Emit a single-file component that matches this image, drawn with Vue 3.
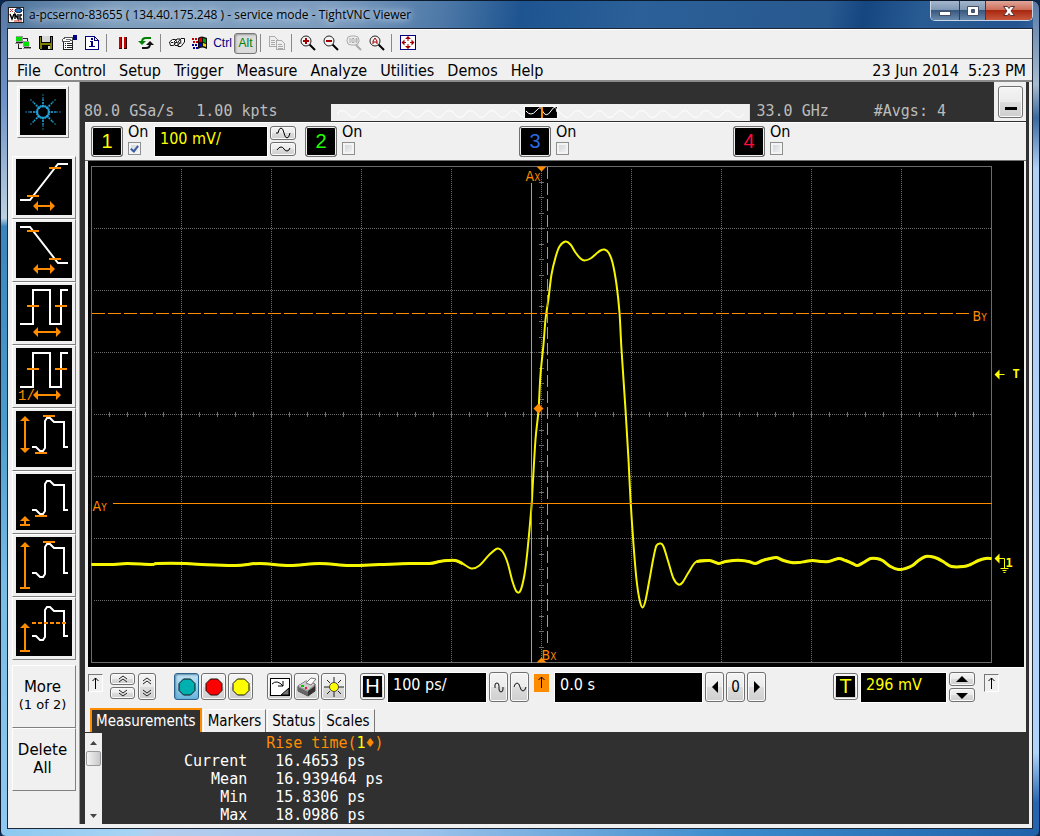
<script setup>
import { computed, ref } from 'vue';

const menus = ['File', 'Control', 'Setup', 'Trigger', 'Measure', 'Analyze', 'Utilities', 'Demos', 'Help'];

const channels = ref([
  { id: 1, on: true, scale: '100 mV/', color: '#ffff00' },
  { id: 2, on: false, scale: null, color: '#22ff00' },
  { id: 3, on: false, scale: null, color: '#2a6ae0' },
  { id: 4, on: false, scale: null, color: '#ff0a3c' },
]);

const timebase = ref('100 ps/');
const delay = ref('0.0 s');
const level = ref('296 mV');

const tabs = ['Measurements', 'Markers', 'Status', 'Scales'];
const activeTab = ref('Measurements');

const results = [
  { label: 'Current', value: '16.4653 ps' },
  { label: 'Mean', value: '16.939464 ps' },
  { label: 'Min', value: '15.8306 ps' },
  { label: 'Max', value: '18.0986 ps' },
];

// Measurement icons, drawn on a 56 x 56 square
const pulse = 'M16 36H20L24 40H27L29 37V10L31 7H34L38 11H48V36H52';
const square = 'M4 39H17V5H34V39H45V5H52';
const base = 'M4 51H14';
const tools = [
  { name: 'Rise time', wave: 'M4 41H14L42 5H52', marks: 'M11 37H23M33 9H45M20 47H36', heads: 'M17 47l5 -5v10zM39 47l-5 -5v10z' },
  { name: 'Fall time', wave: 'M4 5H14L42 41H52', marks: 'M11 9H23M33 37H45M20 47H36', heads: 'M17 47l5 -5v10zM39 47l-5 -5v10z' },
  { name: 'Period', wave: square, marks: 'M11 21H23M39 21H51M20 47H42', heads: 'M17 47l5 -5v10zM45 47l-5 -5v10z' },
  { name: 'Frequency', wave: square, marks: 'M11 21H23M39 21H51M20 47H42', heads: 'M17 47l5 -5v10zM45 47l-5 -5v10z', text: '1/' },
  { name: 'V p-p', wave: pulse, marks: 'M27 5H39M19 42H31M9 8V39', heads: 'M9 5l5 5h-10zM9 42l5 -5h-10z' },
  { name: 'V min', wave: pulse, marks: 'M19 42H31M9 45V51' + base, heads: 'M9 42l5 5h-10z' },
  { name: 'V max', wave: pulse, marks: 'M27 5H39M9 8V51' + base, heads: 'M9 5l5 5h-10z' },
  { name: 'V avg', wave: pulse, marks: 'M9 26V51' + base, dash: 'M16 23H51', heads: 'M9 23l5 5h-10z' },
];

// Agilent spark
const spark = [];
for (let i = 0; i < 8; i++) {
  const a = (i * Math.PI) / 4;
  [[6, 1.5], [9, 1.1], [12, 0.9], [14, 0.8], [17, 0.7]].forEach(([r, size]) => {
    spark.push({ x: 23 + r * Math.cos(a), y: 23 + r * Math.sin(a), size });
  });
  const b = a + Math.PI / 8;
  spark.push({ x: 23 + 6 * Math.cos(b), y: 23 + 6 * Math.sin(b), size: 1.2 });
}

// Graticule: 10 x 8 divisions of 90 x 62
const cols = [1, 2, 3, 4, 5, 6, 7, 8, 9].map((n) => n * 90);
const rows = [1, 2, 3, 4, 5, 6, 7].map((n) => n * 62);
const ticks = computed(() => {
  let d = '';
  for (let x = 18; x < 900; x += 18) d += `M${x} 245.5v5`;
  for (let i = 1; i < 32; i++) d += `M447.5 ${Math.round(i * 15.5)}h5`;
  return d;
});

const samples = [
  [0, 398], [22, 398], [36, 397], [60, 398], [66, 397], [94, 397], [110, 398], [144, 399], [168, 397],
  [198, 399], [228, 397], [258, 399], [288, 398], [318, 397], [338, 397], [348, 395], [356, 394], [364, 394],
  [371, 397], [380, 402], [388, 399], [398, 388], [406, 382], [411, 385], [416, 396], [421, 415], [425, 425],
  [429, 424], [433, 408], [436, 384], [440, 340], [441, 323], [444, 273], [447, 244], [449, 208], [452, 178],
  [454, 153], [457, 132], [460, 108], [464, 91], [468, 80], [474, 75], [479, 78], [484, 86], [489, 92],
  [493, 94], [499, 92], [505, 87], [509, 84], [513, 83], [517, 86], [521, 96], [525, 118], [528, 146],
  [530, 183], [534, 243], [537, 293], [539, 333], [542, 378], [545, 413], [548, 433], [551, 441], [554, 434],
  [558, 413], [562, 391], [565, 379], [569, 377], [572, 380], [577, 396], [582, 412], [587, 418], [591, 416],
  [597, 406], [605, 395], [618, 394], [627, 397], [634, 395], [642, 394], [650, 394], [657, 395], [664, 397],
  [671, 394], [679, 392], [685, 391], [692, 394], [700, 396], [707, 396], [714, 395], [721, 394], [729, 395],
  [737, 395], [747, 392], [754, 394], [761, 397], [766, 399], [772, 396], [779, 392], [785, 392], [791, 394],
  [799, 400], [807, 403], [814, 402], [821, 399], [827, 394], [834, 390], [839, 390], [846, 392], [853, 396],
  [860, 400], [872, 400], [879, 398], [887, 394], [894, 392], [900, 392],
];

// Catmull-Rom through the points
function smooth(points) {
  let d = `M${points[0]}`;
  for (let i = 0; i < points.length - 1; i++) {
    const p0 = points[i - 1] || points[i];
    const p1 = points[i];
    const p2 = points[i + 1];
    const p3 = points[i + 2] || p2;
    d += `C${p1[0] + (p2[0] - p0[0]) / 6} ${p1[1] + (p2[1] - p0[1]) / 6}`;
    d += ` ${p2[0] - (p3[0] - p1[0]) / 6} ${p2[1] - (p3[1] - p1[1]) / 6} ${p2[0]} ${p2[1]}`;
  }
  return d;
}

const trace = computed(() => smooth(samples));
// The quiet parts look thicker because the noise adds up there
const noise = computed(() => smooth(samples.filter((p) => p[0] < 372)) + smooth(samples.filter((p) => p[0] > 604)));

const memoryWave = 'M6 10' + 'q5 -7 10.700 0t10.700 0'.repeat(19);
</script>

<template>
  <div class="window">
    <header class="titlebar">
      <svg class="app-icon" width="16" height="16" viewBox="0 0 16 16">
        <rect width="16" height="16" fill="#fff" stroke="#222" stroke-width="2" />
        <path d="M2 2l3 3M5 2L2 5" stroke="#c33" />
        <ellipse cx="10.5" cy="3.5" rx="3.5" ry="2" fill="#27c" stroke="#113" />
        <path d="M2 7l2 5l2 -5M7 12V7l3 5V7M14 8h-2v4h2" fill="none" stroke="#000" stroke-width="1.4" />
        <path d="M6 14h8" stroke="#d22" />
      </svg>
      <span class="title">a-pcserno-83655 ( 134.40.175.248 ) - service mode - TightVNC Viewer</span>
      <div class="win-buttons">
        <button type="button" aria-label="Minimize">
          <svg width="14" height="12" viewBox="0 0 14 12"><rect x="1.5" y="6.5" width="11" height="4" fill="#fff" stroke="#454f66" /></svg>
        </button>
        <button type="button" class="mid" aria-label="Maximize">
          <svg width="14" height="12" viewBox="0 0 14 12"><path d="M1.500 1.500h11v9h-11zM5.500 4.500h3v3h-3z" fill="#fff" fill-rule="evenodd" stroke="#454f66" /></svg>
        </button>
        <button type="button" class="close" aria-label="Close">
          <svg width="14" height="12" viewBox="0 0 14 12"><path d="M1.500 1.500h4l1.500 2l1.500 -2h4l-3.500 4.500l3.500 4.500h-4l-1.500 -2l-1.500 2h-4l3.500 -4.500z" fill="#fff" stroke="#5a3030" /></svg>
        </button>
      </div>
    </header>

    <div class="client">
      <div class="toolbar">
        <button type="button" aria-label="New connection">
          <svg width="16" height="16" viewBox="0 0 16 16" shape-rendering="crispEdges">
            <path d="M1 1h7v6H1zM0 8h7v1H0zM8 6h6v6H8zM8 13h8v1H8z" fill="#999" />
            <path d="M1 2h6v4H1zM9 7h5v4H9z" fill="#00e000" />
            <path d="M8 3h4v3M3 9v4h4M1 7h7M9 12h7" fill="none" stroke="#222" />
          </svg>
        </button>
        <button type="button" aria-label="Save">
          <svg width="16" height="16" viewBox="0 0 16 16" shape-rendering="crispEdges">
            <path d="M1 1h14v14H2l-1 -1z" fill="#000" /><path d="M2 2h1v6h10V2h1v12H2z" fill="#808000" />
            <path d="M4 1h8v6H4z" fill="#d8d8d8" /><path d="M4 10h8v4H4z" fill="#000" /><path d="M10 11h2v3h-2z" fill="#ddd" />
          </svg>
        </button>
        <button type="button" aria-label="Options">
          <svg width="16" height="16" viewBox="0 0 16 16" shape-rendering="crispEdges">
            <path d="M2.500 5.500h9v9h-9z" fill="#fff" stroke="#222" />
            <path d="M4 8.500h1M6 8.500h5M4 10.500h1M6 10.500h5M4 12.500h1M6 12.500h5" stroke="#222" />
            <path d="M1 5l4 -3h6l1 3l-3 1H4l-2 1z" fill="#fff" stroke="#555" />
            <path d="M12 0h4v5h-4z" fill="#000080" /><path d="M5 4.500h5" stroke="#777" />
          </svg>
        </button>
        <button type="button" aria-label="Connection info">
          <svg width="16" height="16" viewBox="0 0 16 16" shape-rendering="crispEdges">
            <path d="M1.500 1.500h9l4 4v9h-13zM10.500 1.500v4h4" fill="#fff" stroke="#000080" />
            <path d="M7 3h2v2H7zM6 6h3v5h2v1H5v-1h2V7H6z" fill="#000080" />
          </svg>
        </button>
        <i class="sep"></i>
        <button type="button" aria-label="Pause">
          <svg width="16" height="16" viewBox="0 0 16 16" shape-rendering="crispEdges">
            <path d="M4 2h3v12H4zM9 2h3v12H9z" fill="#300" /><path d="M4 2h2v11H4zM9 2h2v11H9z" fill="#d00000" />
          </svg>
        </button>
        <button type="button" aria-label="Refresh">
          <svg width="16" height="16" viewBox="0 0 16 16">
            <path d="M13 3H8q-4 0 -4 4" fill="none" stroke="#008000" stroke-width="2" /><path d="M0 6h8l-4 4z" fill="#008000" />
            <path d="M4 13h4q4 0 4 -4" fill="none" stroke="#111" stroke-width="2" /><path d="M8 10h8l-4 -4z" fill="#111" />
          </svg>
        </button>
        <i class="sep"></i>
        <button type="button" aria-label="Ctrl-Alt-Del">
          <svg width="16" height="16" viewBox="0 0 16 16">
            <path d="M0.500 7l3 -2.500h3l1 2l-3 4h-3zM5 7l3 -3h3l1 2l-3 4.500h-3zM9 7l3 -3.500h3.500v3.500l-3.500 4.500h-3z" fill="#fff" stroke="#111" />
            <path d="M2 7.500h2M6.500 7.500h2M10.500 8h2" stroke="#111" />
          </svg>
        </button>
        <button type="button" aria-label="Ctrl-Esc">
          <svg width="16" height="16" viewBox="0 0 16 16">
            <path d="M6 3q3 -3 9 0v11q-5 -3 -9 0z" fill="#111" />
            <path d="M7 4q1 -2 3 -1v4H7z" fill="#e00000" /><path d="M11 3l3 1v4l-3 -1z" fill="#00a000" />
            <path d="M7 9l3 -1v3l-3 1z" fill="#0000c0" /><path d="M11 8l3 1v3l-3 -1z" fill="#e8d800" />
            <path d="M0 4h5M1 7h5" stroke="#c00000" stroke-width="2" stroke-dasharray="2 1" /><path d="M0 10h5M1 13h5" stroke="#0000a0" stroke-width="2" stroke-dasharray="2 1" />
          </svg>
        </button>
        <button type="button" class="ctrl">Ctrl</button>
        <button type="button" class="alt">Alt</button>
        <i class="sep"></i>
        <button type="button" aria-label="Transfer files">
          <svg width="16" height="16" viewBox="0 0 16 16" shape-rendering="crispEdges">
            <path d="M0.500 1.500h5l3 3v7h-8zM2 5h4M2 7h4M2 9h4" fill="#eee" stroke="#aaa" />
            <path d="M7.500 5.500h5l3 3v6h-8zM9 9h4M9 11h5M9 13h5" fill="#eee" stroke="#aaa" />
          </svg>
        </button>
        <i class="sep"></i>
        <button type="button" aria-label="Zoom in">
          <svg width="16" height="16" viewBox="0 0 16 16">
            <path d="M9.500 9.500l5.500 5.500" stroke="#000" stroke-width="2" /><circle cx="6" cy="6" r="5" fill="#f4f4f4" stroke="#222" />
            <path d="M3 6h6M6 3v6" stroke="#a00000" stroke-width="2" />
          </svg>
        </button>
        <button type="button" aria-label="Zoom out">
          <svg width="16" height="16" viewBox="0 0 16 16">
            <path d="M9.500 9.500l5.500 5.500" stroke="#000" stroke-width="2" /><circle cx="6" cy="6" r="5" fill="#f4f4f4" stroke="#222" />
            <path d="M3 6h6" stroke="#a00000" stroke-width="2" />
          </svg>
        </button>
        <button type="button" aria-label="Zoom 100%">
          <svg width="16" height="16" viewBox="0 0 16 16">
            <path d="M10 10l5 5" stroke="#aaa" stroke-width="2" /><rect x="1" y="1" width="12" height="9" rx="4" fill="#eee" stroke="#aaa" />
            <path d="M4 3v5M6 3.500h2v4h-2zM10 3.500h1v4h-1z" fill="none" stroke="#aaa" />
          </svg>
        </button>
        <button type="button" aria-label="Zoom auto">
          <svg width="16" height="16" viewBox="0 0 16 16">
            <path d="M9.500 9.500l5.500 5.500" stroke="#000" stroke-width="2" /><circle cx="6" cy="6" r="5" fill="#f4f4f4" stroke="#222" />
            <path d="M4 9V6l2 -3l2 3v3M4 7h4" fill="none" stroke="#a00000" />
          </svg>
        </button>
        <i class="sep"></i>
        <button type="button" aria-label="Full screen">
          <svg width="16" height="16" viewBox="0 0 16 16">
            <path d="M0.500 0.500h15v14h-15z" fill="#fff" stroke="#000080" shape-rendering="crispEdges" />
            <path d="M8 1l3 3H5zM8 14l3 -3H5zM1.500 7.500l3 -3v6zM14.500 7.500l-3 -3v6z" fill="#a00000" />
            <path d="M8 4v2M8 9v2M4 7.500h2M10 7.500h2" stroke="#a00000" />
          </svg>
        </button>
      </div>

      <nav class="menubar">
        <a v-for="item in menus" :key="item" href="#">{{ item }}</a>
        <span class="clock">23 Jun 2014&nbsp; 5:23 PM</span>
      </nav>

      <div class="scope">
        <aside class="sidebar">
          <button type="button" class="logo" aria-label="Agilent">
            <svg width="46" height="46" viewBox="0 0 46 46">
              <circle v-for="(dot, i) in spark" :key="i" :cx="dot.x" :cy="dot.y" :r="dot.size" fill="#22a0d8" />
              <circle cx="23" cy="23" r="4" />
            </svg>
          </button>
          <button v-for="tool in tools" :key="tool.name" type="button" class="tool" :aria-label="tool.name">
            <svg width="56" height="56" viewBox="0 0 56 56">
              <path :d="tool.wave" fill="none" stroke="#fff" stroke-width="2" />
              <path :d="tool.marks" fill="none" stroke="#ff8c00" stroke-width="2" />
              <path v-if="tool.dash" :d="tool.dash" stroke="#ff8c00" stroke-width="2" stroke-dasharray="4 2" />
              <path :d="tool.heads" fill="#ff8c00" />
              <text v-if="tool.text" class="icon-text" x="2" y="52">{{ tool.text }}</text>
            </svg>
          </button>
          <button type="button" class="side-text more">More<small>(1 of 2)</small></button>
          <button type="button" class="side-text">Delete<br>All</button>
        </aside>

        <main class="main">
          <div class="status">
            <span class="rate">80.0 GSa/s</span>
            <span class="points">1.00 kpts</span>
            <svg class="memory" viewBox="0 0 419 17" preserveAspectRatio="none">
              <rect width="419" height="17" fill="#f0f0f0" />
              <path :d="memoryWave" fill="none" stroke="#fff" stroke-width="1" />
              <rect x="193.5" y="2.5" width="33" height="12" fill="#000" stroke="#fff" />
              <path d="M195 7q5 6 10 0t6 -1M211 6q4 9 9 1t6 1" fill="none" stroke="#fff" />
              <path d="M211 3v11" stroke="#ff8c00" stroke-width="2" />
            </svg>
            <span class="bandwidth">33.0 GHz</span>
            <span>#Avgs: 4</span>
            <div class="collapse-box">
              <button type="button" class="btn collapse" aria-label="Collapse"><i></i></button>
            </div>
          </div>

          <div class="panel">
            <div class="channels">
              <div v-for="ch in channels" :key="ch.id" class="channel">
                <button type="button" class="key" :style="{ color: ch.color }">{{ ch.id }}</button>
                <label class="on">On<input v-model="ch.on" type="checkbox"></label>
                <template v-if="ch.scale">
                  <input v-model="ch.scale" class="field scale" type="text" aria-label="Channel 1 scale">
                  <div class="stack">
                    <button type="button" class="btn small" aria-label="Increase sensitivity">
                      <svg width="16" height="12" viewBox="0 0 16 12"><path d="M1 6h2q1 -5 3 -5t3 5t3 5t3 -5" fill="none" stroke="#000" /></svg>
                    </button>
                    <button type="button" class="btn small" aria-label="Decrease sensitivity">
                      <svg width="16" height="12" viewBox="0 0 16 12"><path d="M2 7q2 -3 4 -3t3 2t3 2t3 -3" fill="none" stroke="#000" /></svg>
                    </button>
                  </div>
                </template>
              </div>
            </div>

            <svg class="plot" viewBox="0 0 936 506">
              <g transform="translate(3.5 5.5)">
                <g fill="none" stroke="#6c6c6c" shape-rendering="crispEdges">
                  <rect width="900" height="496" />
                  <path v-for="x in cols" :key="'c' + x" :d="`M${x} 2V495`" stroke-dasharray="1 1" />
                  <path v-for="y in rows" :key="'r' + y" :d="`M2 ${y}H899`" stroke-dasharray="1 1" />
                  <path :d="ticks" />
                </g>
                <path :d="trace" fill="none" stroke="#f5f500" stroke-width="2" stroke-linejoin="round" />
                <path :d="noise" fill="none" stroke="#f5f500" stroke-width="3" stroke-linejoin="round" />
                <g fill="none" stroke="#ff8c00" shape-rendering="crispEdges">
                  <path d="M440 16V496" />
                  <path d="M456 0V478" stroke-dasharray="12 4" />
                  <path d="M0 147H880" stroke-dasharray="13 3" />
                  <path d="M21 337H900" />
                </g>
                <path d="M445 0h10l-5 5zM445 496h10l-5 -5zM447 237l5 5l-5 5l-5 -5z" fill="#ff8c00" />
                <g class="marker">
                  <text x="434" y="14">A<tspan>X</tspan></text>
                  <text x="450" y="493">B<tspan>X</tspan></text>
                  <text x="1" y="344">A<tspan>Y</tspan></text>
                  <text x="881" y="154">B<tspan>Y</tspan></text>
                </g>
                <g fill="none" stroke="#ffff00">
                  <path d="M906 208h7M906 392h7v10M909 402h8M911 404h4M912 406h2" />
                  <path d="M903 208l5 -5v10zM903 392l5 -5v10z" fill="#ffff00" stroke="none" />
                </g>
                <text class="level" x="921" y="211">T</text>
                <text class="level" x="914" y="400">1</text>
              </g>
            </svg>

            <div class="controls">
              <div class="group">
                <span class="pin">
                  <svg width="9" height="14" viewBox="0 0 9 14"><path d="M4.500 2v11M1.500 5l3 -3l3 3" fill="none" stroke="#000" /></svg>
                </span>
                <div class="stack chev">
                  <button type="button" class="btn small" aria-label="Panel up">
                    <svg width="12" height="10" viewBox="0 0 12 10"><path d="M2 5l4 -3l4 3M2 8l4 -3l4 3" fill="none" stroke="#222" /></svg>
                  </button>
                  <button type="button" class="btn small" aria-label="Panel down">
                    <svg width="12" height="10" viewBox="0 0 12 10"><path d="M2 2l4 3l4 -3M2 5l4 3l4 -3" fill="none" stroke="#222" /></svg>
                  </button>
                </div>
                <button type="button" class="btn split" aria-label="Panel size">
                  <svg width="12" height="24" viewBox="0 0 12 24"><path d="M2 6l4 -3l4 3M2 9l4 -3l4 3M2 15l4 3l4 -3M2 18l4 3l4 -3" fill="none" stroke="#222" /></svg>
                </button>
              </div>
              <div class="group">
                <button type="button" class="btn tile selected" aria-label="Run">
                  <svg width="18" height="18" viewBox="0 0 18 18"><path d="M5.500 1h7l4.500 4.500v7l-4.500 4.500h-7l-4.500 -4.500v-7z" fill="#00b0b0" stroke="#111" /></svg>
                </button>
                <button type="button" class="btn tile" aria-label="Stop">
                  <svg width="18" height="18" viewBox="0 0 18 18"><path d="M5.500 1h7l4.500 4.500v7l-4.500 4.500h-7l-4.500 -4.500v-7z" fill="#f00" stroke="#111" /></svg>
                </button>
                <button type="button" class="btn tile" aria-label="Single">
                  <svg width="18" height="18" viewBox="0 0 18 18"><path d="M5.500 1h7l4.500 4.500v7l-4.500 4.500h-7l-4.500 -4.500v-7z" fill="#ff0" stroke="#111" /></svg>
                </button>
              </div>
              <div class="group">
                <button type="button" class="btn tile" aria-label="Clear display">
                  <svg width="22" height="22" viewBox="0 0 22 22">
                    <rect x="1.5" y="2.5" width="19" height="17" fill="#fff" stroke="#000" />
                    <path d="M20 12v7h-8z" fill="#777" stroke="#000" /><path d="M3 8q5 -5 11 2M14 5v5h-5" fill="none" stroke="#000" />
                  </svg>
                </button>
                <button type="button" class="btn tile" aria-label="Print">
                  <svg width="22" height="22" viewBox="0 0 22 22">
                    <path d="M2 10l8 -5l9 3v7l-7 5l-10 -5z" fill="#999" stroke="#444" /><path d="M2 10l8 -5l9 3l-7 6z" fill="#ccc" />
                    <path d="M10 7l5 -5l5 1l-5 6z" fill="#fff" stroke="#777" /><path d="M2 11l10 5v4l-10 -5z" fill="#666" />
                    <path d="M12 15l7 -5v5l-7 5z" fill="#333" /><path d="M5 10h3" stroke="#0c0" stroke-width="2" /><path d="M9 12h2" stroke="#e22" stroke-width="2" />
                  </svg>
                </button>
                <button type="button" class="btn tile" aria-label="Brightness">
                  <svg width="22" height="22" viewBox="0 0 22 22">
                    <path d="M11 1v5M11 16v5M1 11h5M16 11h5M4 4l3 3M15 15l3 3M18 4l-3 3M7 15l-3 3" stroke="#222" />
                    <circle cx="11" cy="11" r="4.5" fill="#ff0" stroke="#444" />
                  </svg>
                </button>
              </div>
              <div class="group horizontal">
                <button type="button" class="btn tile letter"><b>H</b></button>
                <input v-model="timebase" class="field time" type="text" aria-label="Time per division">
                <button type="button" class="btn tall" aria-label="Zoom out time">
                  <svg width="14" height="16" viewBox="0 0 14 16"><path d="M3 9V6q0 -2 2 -2t2 3v3q0 3 2 3t2 -3V8" fill="none" stroke="#111" /></svg>
                </button>
                <button type="button" class="btn tall" aria-label="Zoom in time">
                  <svg width="14" height="16" viewBox="0 0 14 16"><path d="M1 8q1 -4 3 -4t3 4t3 4t3 -4" fill="none" stroke="#111" /></svg>
                </button>
                <span class="pin orange">
                  <svg width="9" height="14" viewBox="0 0 9 14"><path d="M4.500 1v11M1.500 4l3 -3l3 3" fill="none" stroke="#000" /></svg>
                </span>
                <input v-model="delay" class="field delay" type="text" aria-label="Horizontal position">
                <button type="button" class="btn tall" aria-label="Move left">
                  <svg width="8" height="12" viewBox="0 0 8 12"><path d="M7 0v12L1 6z" /></svg>
                </button>
                <button type="button" class="btn tall">0</button>
                <button type="button" class="btn tall" aria-label="Move right">
                  <svg width="8" height="12" viewBox="0 0 8 12"><path d="M1 0v12l6 -6z" /></svg>
                </button>
              </div>
              <div class="group trigger">
                <button type="button" class="btn tile letter yellow"><b>T</b></button>
                <input v-model="level" class="field volt" type="text" aria-label="Trigger level">
                <div class="stack spin">
                  <button type="button" class="btn small" aria-label="Level up">
                    <svg width="12" height="7" viewBox="0 0 12 7"><path d="M0 6l6 -6l6 6z" /></svg>
                  </button>
                  <button type="button" class="btn small" aria-label="Level down">
                    <svg width="12" height="7" viewBox="0 0 12 7"><path d="M0 1l6 6l6 -6z" /></svg>
                  </button>
                </div>
                <span class="pin">
                  <svg width="9" height="14" viewBox="0 0 9 14"><path d="M4.500 2v11M1.500 5l3 -3l3 3" fill="none" stroke="#000" /></svg>
                </span>
              </div>
            </div>

            <div class="tabs">
              <button
                v-for="tab in tabs"
                :key="tab"
                type="button"
                class="tab"
                :class="{ active: tab === activeTab }"
                @click="activeTab = tab"
              >{{ tab }}</button>
            </div>
          </div>

          <div class="results">
            <div class="scrollbar">
              <svg width="7" height="4" viewBox="0 0 7 4"><path d="M0 4l3.500 -4l3.500 4z" fill="#444" /></svg>
              <i class="thumb"></i>
              <svg width="7" height="4" viewBox="0 0 7 4"><path d="M0 0l3.500 4l3.500 -4z" fill="#444" /></svg>
            </div>
            <table>
              <thead>
                <tr><td></td><th scope="col">Rise time(<em>1</em>♦)</th></tr>
              </thead>
              <tbody>
                <tr v-for="row in results" :key="row.label">
                  <th scope="row">{{ row.label }}</th>
                  <td>{{ row.value }}</td>
                </tr>
              </tbody>
            </table>
          </div>
        </main>
      </div>
    </div>
  </div>
</template>

<style>
body {
  margin: 0;
  background: #0b2850;
}
</style>

<style scoped>
.window {
  display: flex;
  flex-direction: column;
  box-sizing: border-box;
  min-height: 100vh;
  padding: 0 6px 7px;
  border: 1px solid #0c1a2e;
  border-radius: 8px 8px 6px 6px;
  font-family: "DejaVu Sans Condensed", "Noto Sans", sans-serif;
  font-size: 16px;
  color: #000;
  background:
    linear-gradient(90deg, #8cc8f0, #a8d4f4 13%, #b4cdee 15%, #9ec4ec 40%, #3c8ccc 70%, #1f62aa) bottom / 100% 7px no-repeat,
    linear-gradient(#5878a4, #6f93c8 12%, #bcd0e0 26%, #3a85bb 27%, #4a9ccc 50%, #78bce4 70%, #90c8f0) left / 6px 100% no-repeat,
    linear-gradient(#5878a4, #a8bcd0 10%, #3c6a9c 14%, #b0d0f4 20%, #b0d4f8 90%, #2565b0 96%) right / 6px 100% no-repeat,
    linear-gradient(100deg, #4a7098, #7d9dbc 10%, #7c9cbe 28%, #4a76a6 38%, #1e5490 44%, #2b6098 54%, #28598f 70%, #154680 73%, #2a5c94 78%, #235490 86%, #6f8fb4 94%, #7c9abc);
}

button {
  padding: 0;
  font: inherit;
  color: inherit;
}

svg {
  display: block;
}

/* Title bar */
.titlebar {
  display: flex;
  height: 27px;
}
.app-icon {
  margin: 6px 0 0 1px;
}
.title {
  flex: 1;
  padding: 5px 0 0 5px;
  font-family: "Open Sans", "Noto Sans", sans-serif;
  font-size: 12px;
  line-height: 18px;
  text-shadow: 0 0 6px #c4d6e8, 0 0 8px #b0c6de, 0 0 12px #b0c6de;
  white-space: nowrap;
}
.win-buttons {
  display: flex;
  height: 19px;
  border: 1px solid #c8d6e8;
  border-top: 0;
  border-radius: 0 0 5px 5px;
  overflow: hidden;
}
.win-buttons button {
  display: grid;
  place-items: center;
  width: 29px;
  border: 0;
  border-right: 1px solid #2a3c58;
  background: linear-gradient(#a4b6cc, #7f97b4 48%, #38587e 50%, #6888ac);
}
.win-buttons .mid {
  width: 26px;
}
.win-buttons .close {
  width: 46px;
  border-right: 0;
  background: linear-gradient(#e0a698, #cc6c58 48%, #a82810 50%, #c8583c);
}

/* Client area */
.client {
  display: flex;
  flex: 1;
  flex-direction: column;
  border: 1px solid #1c2634;
  background: #f0f0f0;
  padding-bottom: 4px;
}
.toolbar {
  display: flex;
  align-items: center;
  height: 26px;
  padding: 0 0 2px 3px;
  border-top: 1px solid #fff;
  border-bottom: 1px solid #707070;
}
.toolbar button {
  display: grid;
  place-items: center;
  width: 23px;
  height: 22px;
  border: 0;
  background: none;
  font-family: "Liberation Sans", sans-serif;
  font-size: 12px;
}
.toolbar .ctrl {
  color: #000080;
}
.toolbar .alt {
  height: 21px;
  border: 1px solid #777;
  border-radius: 3px;
  background: #dcdcdc;
  box-shadow: inset 1px 1px 2px #999;
  color: #008000;
}
.sep {
  width: 1px;
  height: 18px;
  margin: 0 4px 0 3px;
  background: #888;
}
.menubar {
  display: flex;
  gap: 13px;
  height: 21px;
  padding: 0 6px 0 9px;
  border-bottom: 2px solid #8a8a8a;
  line-height: 23px;
}
.menubar a {
  color: #000;
  text-decoration: none;
}
.clock {
  margin-left: auto;
}

/* Scope layout */
.scope {
  display: flex;
  flex: 1;
  padding-right: 3px;
}
.sidebar {
  display: flex;
  flex-direction: column;
  width: 67px;
  padding: 4px 0 0 4px;
  border-right: 1px solid #999;
}
.logo,
.tool,
.side-text {
  box-sizing: border-box;
  border: 1px solid;
  border-color: #fff #808080 #808080 #fff;
  background: #f0f0f0;
}
.logo {
  width: 52px;
  height: 52px;
  margin: 0 0 18px 5px;
  padding: 2px;
}
.tool,
.side-text {
  width: 64px;
  height: 63px;
}
.tool {
  padding: 2px 3px 3px;
}
.logo svg,
.tool svg {
  background: #000;
}
.icon-text {
  fill: #ff8c00;
  font: 14px "Liberation Mono", monospace;
}
.side-text {
  padding: 0 3px 2px 0;
  font-family: "DejaVu Sans", sans-serif;
  font-size: 15px;
  line-height: 18px;
}
.side-text small {
  display: block;
  font-size: 13px;
}
.more {
  margin-top: 5px;
}

.main {
  display: flex;
  flex: 1;
  flex-direction: column;
  min-width: 0;
  background: #303030;
}
.status {
  display: flex;
  align-items: flex-end;
  height: 40px;
  padding-right: 3px;
  padding-left: 4px;
  color: #bcbcbc;
  font-family: "DejaVu Sans Mono", monospace;
  font-size: 15px;
  line-height: 22px;
  white-space: nowrap;
}
.points {
  margin-left: 22px;
}
.memory {
  flex: 1;
  min-width: 0;
  height: 17px;
  margin: 0 7px 1px 53px;
}
.bandwidth {
  margin-right: 45px;
}
.collapse-box {
  align-self: stretch;
  margin: 0 0 1px 48px;
  padding: 4px 3px 3px 4px;
  background: #f0f0f0;
}
.btn {
  display: grid;
  place-items: center;
  box-sizing: border-box;
  border: 1px solid #707070;
  border-radius: 3px;
  background: linear-gradient(#f4f4f4, #ebebeb 50%, #dcdcdc 52%, #cfcfcf);
  box-shadow: inset 0 0 0 1px #fafafa;
}
.collapse {
  width: 25px;
  height: 32px;
}
.collapse i {
  width: 12px;
  height: 3px;
  margin-top: 12px;
  background: #000;
}

.panel {
  margin: 0 3px 0 5px;
  border-top: 1px solid #fff;
  background: #f0f0f0;
}
.channels {
  display: grid;
  grid-template-columns: repeat(4, minmax(0, 214px));
  height: 37px;
  padding-left: 6px;
  border-bottom: 1px solid #707070;
}
.channel {
  display: flex;
  align-items: flex-start;
  padding-top: 3px;
}
.key {
  box-sizing: border-box;
  width: 32px;
  height: 31px;
  border: 1px solid #707070;
  border-radius: 3px;
  background: #000;
  box-shadow: inset 0 0 0 1px #f0f0f0;
  font-family: "Liberation Sans", sans-serif;
  font-size: 20px;
}
.on {
  display: flex;
  flex-direction: column;
  width: 26px;
  padding-left: 5px;
  line-height: 12px;
}
.on input {
  appearance: none;
  width: 13px;
  height: 13px;
  margin: 4px 0 0;
  border: 1px solid #8e8f8f;
  background: linear-gradient(135deg, #cdd2d8, #f6f6f6);
  box-shadow: inset 0 0 0 2px #f4f4f4;
}
.on input:checked::after {
  content: "";
  display: block;
  width: 3px;
  height: 6px;
  margin: 1px 0 0 3px;
  border: solid #3c5ca0;
  border-width: 0 2px 2px 0;
  transform: rotate(38deg);
}
.field {
  box-sizing: border-box;
  height: 31px;
  padding: 0 5px 6px;
  border: 1px solid #fff;
  border-radius: 0;
  background: #000;
  color: #fff;
  font: inherit;
}
.scale {
  width: 114px;
  color: #ff0;
}
.stack {
  display: flex;
  flex-direction: column;
  gap: 2px;
  margin-left: 2px;
}
.stack .small {
  width: 26px;
  height: 14px;
}

.plot {
  width: auto;
  margin: 0 2px 0 3px;
  border-bottom: 1px solid #fff;
  background: #000;
}
.marker {
  fill: #ff8c00;
  font: 14px "DejaVu Sans Condensed", sans-serif;
}
.marker tspan {
  font-size: 10px;
}
.level {
  fill: #ff0;
  font: bold 12px "DejaVu Sans Mono", monospace;
}

/* Bottom controls */
.controls {
  display: flex;
  align-items: flex-start;
  box-sizing: border-box;
  height: 40px;
  padding: 4px 27px 0 3px;
}
.group {
  display: flex;
  align-items: flex-start;
  gap: 2px;
  margin-right: 14px;
}
.group + .group {
  margin-left: 4px;
}
.group + .group + .group {
  margin-left: 0;
}
.pin {
  display: grid;
  place-items: center;
  box-sizing: border-box;
  width: 15px;
  height: 18px;
  margin-top: 2px;
  border: 1px solid;
  border-color: #777 #fff #fff #777;
}
.orange {
  margin: 2px 3px 0;
  border: 0;
  background: #ff8c00;
}
.stack.chev {
  margin: 1px 1px 0 5px;
}
.chev .small {
  width: 25px;
  height: 12px;
}
.split {
  width: 18px;
  height: 27px;
  margin-top: 1px;
}
.tile {
  width: 25px;
  height: 27px;
  margin-top: 1px;
}
.selected {
  border-color: #2c628b;
  background: linear-gradient(#c4e4f4, #98d0ee 50%, #68b4dc);
  box-shadow: inset 1px 1px 2px #5b8aa8;
}
.letter b {
  width: 19px;
  height: 21px;
  background: #000;
  color: #fff;
  font-family: "Liberation Sans", sans-serif;
  font-size: 20px;
  font-weight: 400;
  line-height: 21px;
}
.yellow b {
  color: #ff0;
}
.horizontal {
  flex: 1;
}
.tall {
  width: 19px;
  height: 30px;
  font-size: 15px;
}
.time {
  width: 100px;
}
.delay {
  flex: 1;
  min-width: 60px;
  max-width: 149px;
}
.trigger {
  margin-right: 0;
}
.volt {
  width: 87px;
  color: #ff0;
}
.stack.spin {
  margin: 0 7px 0 0;
}

.tabs {
  display: flex;
  align-items: flex-end;
  gap: 1px;
  height: 24px;
  padding-left: 5px;
}
.tab {
  box-sizing: border-box;
  height: 23px;
  padding: 0 4px;
  border: 1px solid;
  border-color: #fff #777 #f0f0f0 #fff;
  border-bottom: 0;
  background: #f0f0f0;
  font-size: 15px;
  line-height: 20px;
}
.tab.active {
  height: 24px;
  border: 2px solid #ff8c00;
  border-bottom: 0;
  background: #303030;
  color: #fff;
}

.results {
  display: flex;
  flex: 1;
  min-height: 91px;
}
.scrollbar {
  display: flex;
  flex-direction: column;
  align-items: center;
  box-sizing: border-box;
  width: 17px;
  margin: 1px 0 0 5px;
  padding: 8px 0 6px;
  background: #f0f0f0;
}
.thumb {
  box-sizing: border-box;
  width: 15px;
  height: 15px;
  margin: 6px 0 auto;
  border: 1px solid #999;
  border-radius: 2px;
  background: linear-gradient(90deg, #f4f4f4, #c8c8cc);
}
table {
  align-self: flex-start;
  margin: 2px 0 0 82px;
  border-collapse: collapse;
  color: #fff;
  font-family: "DejaVu Sans Mono", monospace;
  font-size: 15px;
  line-height: 18px;
}
th,
td {
  height: 18px;
  padding: 0;
  font-weight: 400;
}
tbody th {
  text-align: right;
}
tbody td {
  padding-left: 28px;
}
thead th {
  padding-left: 19px;
  text-align: left;
  color: #ff8c00;
}
thead em {
  color: #ff0;
  font-style: normal;
}
</style>
